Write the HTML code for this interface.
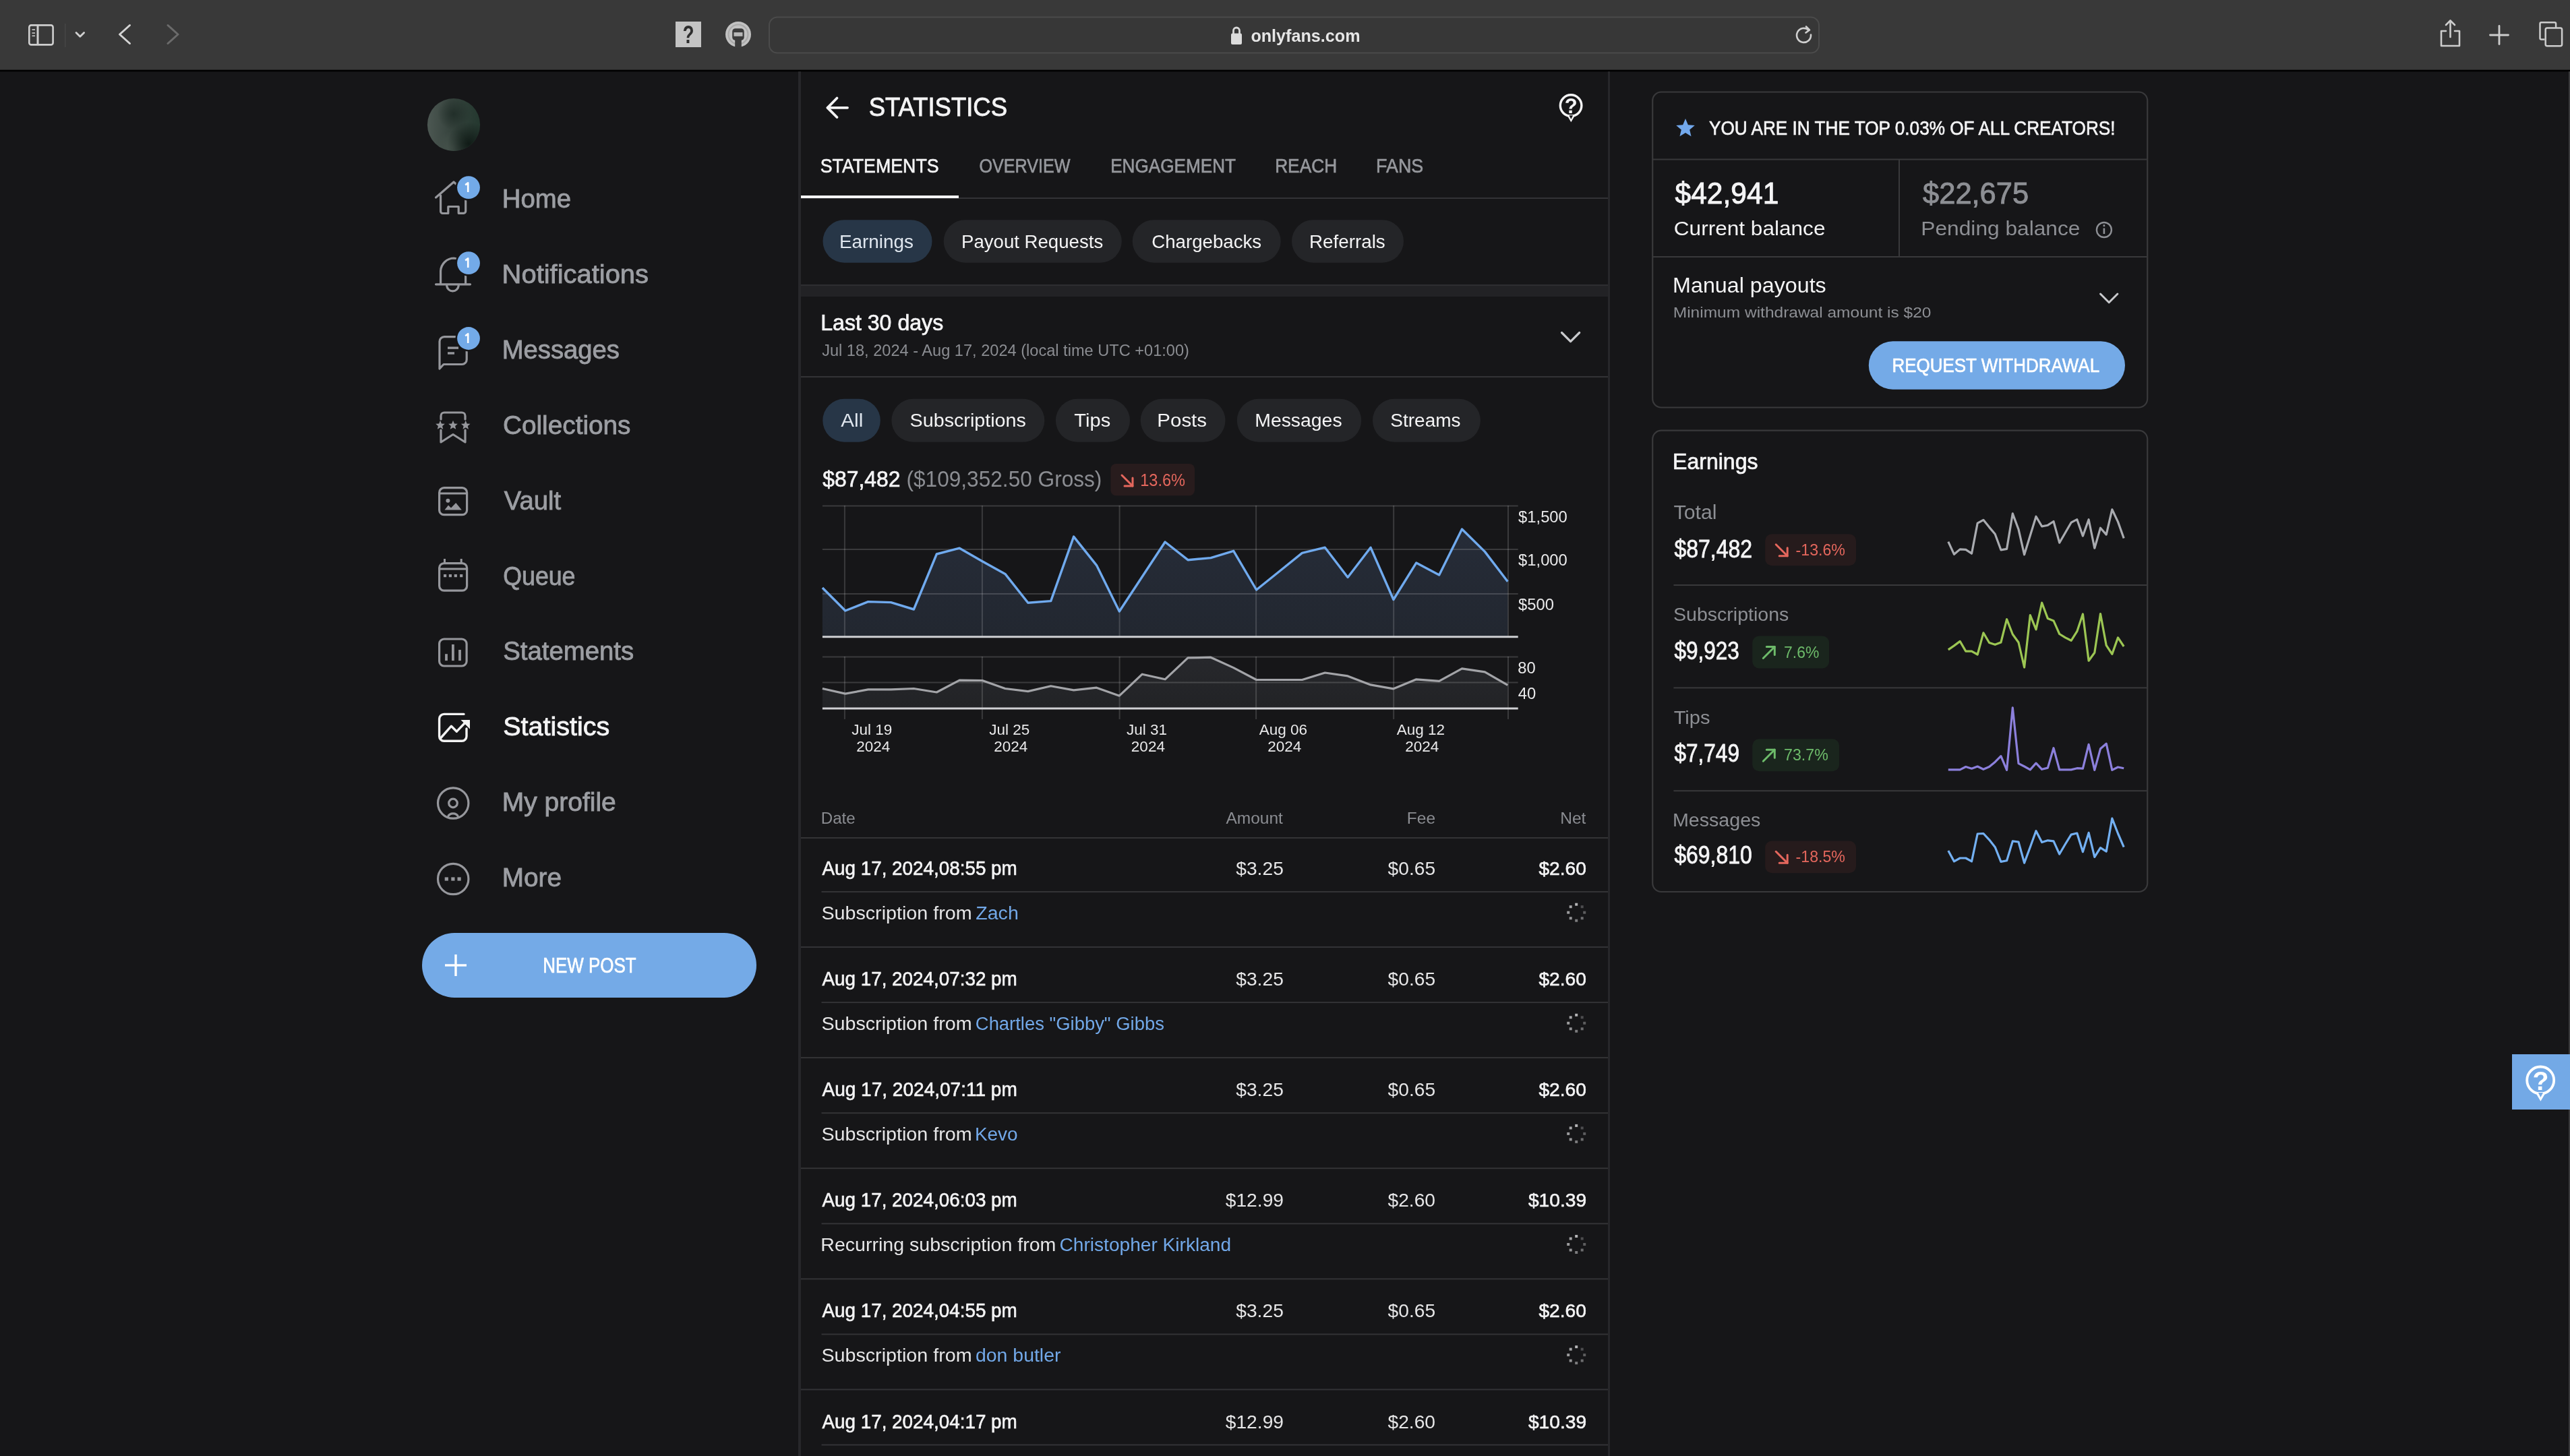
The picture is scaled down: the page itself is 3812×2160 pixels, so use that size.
<!DOCTYPE html>
<html><head><meta charset="utf-8"><title>Statistics</title>
<style>html,body{margin:0;padding:0;background:#161618;overflow:hidden;width:3812px;height:2160px}svg{display:block;font-family:"Liberation Sans",sans-serif;will-change:transform}</style></head>
<body><svg width="3812" height="2160" viewBox="0 0 3812 2160">
<rect x="0.00" y="0.00" width="3812.00" height="2160.00" fill="#161618"/>
<rect x="0.00" y="0.00" width="3812.00" height="104.00" fill="#393939"/>
<rect x="0.00" y="103.60" width="3812.00" height="2.60" fill="#000000"/>
<rect x="3810.00" y="106.00" width="2.00" height="2054.00" fill="#39393b"/>
<g fill="none" stroke="#cfcfcf" stroke-width="2.6"><rect x="43.3" y="37.4" width="35.3" height="29" rx="3"/><line x1="56" y1="37.4" x2="56" y2="66.4" stroke-width="3"/></g>
<g stroke="#bdbdbd" stroke-width="1.8"><line x1="47.5" y1="44" x2="52" y2="44"/><line x1="47.5" y1="49" x2="52" y2="49"/><line x1="47.5" y1="53.2" x2="52" y2="53.2"/></g>
<line x1="96.80" y1="35.00" x2="96.80" y2="70.00" stroke="#4a4a4a" stroke-width="1.2"/>
<polyline points="113,48.5 118.8,54.3 124.6,48.5" fill="none" stroke="#d0d0d0" stroke-width="2.8" stroke-linecap="round" stroke-linejoin="round"/>
<polyline points="192.5,37.5 177.5,51 192.5,64.5" fill="none" stroke="#d4d4d4" stroke-width="3" stroke-linecap="round" stroke-linejoin="round"/>
<polyline points="249,37.5 264,51 249,64.5" fill="none" stroke="#6b6b6b" stroke-width="3" stroke-linecap="round" stroke-linejoin="round"/>
<rect x="1002.00" y="32.00" width="38.00" height="38.00" fill="#c4c4c4"/>
<text x="1012.54" y="64.00" style="font-size:37.82px;font-weight:bold;" textLength="17.09" lengthAdjust="spacingAndGlyphs" fill="#2e2e2e"><tspan fill="#2e2e2e">?</tspan></text>
<circle cx="1095" cy="51" r="19" fill="#c2c2c2"/>
<circle cx="1095" cy="51" r="14.5" fill="none" stroke="#a9a9a9" stroke-width="2"/>
<rect x="1086.2" y="42.2" width="17.5" height="17.5" rx="4.5" fill="#3b3b3b"/>
<rect x="1088.5" y="48" width="13" height="5.8" fill="#b8b8b8"/>
<rect x="1090.2" y="59" width="9.6" height="12.5" fill="#3b3b3b"/>
<rect x="1141.00" y="25.50" width="1557.00" height="53.00" rx="12" fill="#373737" stroke="#4b4b4b" stroke-width="2"/>
<path d="M1829.5,50 v-4.5 a4.5,4.5 0 0 1 9,0 v4.5" fill="none" stroke="#d8d8d8" stroke-width="2.8"/>
<rect x="1826.00" y="49.50" width="16.00" height="16.50" rx="2" fill="#dcdcdc"/>
<text x="1855.39" y="61.70" style="font-size:26.50px;font-weight:bold;" textLength="162.14" lengthAdjust="spacingAndGlyphs" fill="#e6e6e6"><tspan fill="#e6e6e6">onlyfans.com</tspan></text>
<path d="M2686,51.5 a10.5,10.5 0 1 1 -3.5,-7" fill="none" stroke="#cfcfcf" stroke-width="2.6" stroke-linecap="round"/>
<polyline points="2679,39.5 2684,44.5 2678.5,48.5" fill="none" stroke="#cfcfcf" stroke-width="2.6" stroke-linecap="round" stroke-linejoin="round"/>
<g fill="none" stroke="#cdcdcd" stroke-width="2.6" stroke-linecap="round" stroke-linejoin="round"><path d="M3628,46 h-7 v22 h27 v-22 h-7"/><line x1="3634.5" y1="31" x2="3634.5" y2="55"/><polyline points="3628,37 3634.5,30.5 3641,37"/></g>
<g stroke="#cdcdcd" stroke-width="2.8" stroke-linecap="round"><line x1="3707" y1="38.5" x2="3707" y2="65.5"/><line x1="3693.5" y1="52" x2="3720.5" y2="52"/></g>
<g fill="none" stroke="#cdcdcd" stroke-width="2.5"><path d="M3774.5,58.6 h-5 a2,2 0 0 1 -2,-2 v-21.4 a2,2 0 0 1 2,-2 h19.6 a2,2 0 0 1 2,2 v6"/><rect x="3775.7" y="41.4" width="24.4" height="26.9" rx="2.5"/></g>
<defs><linearGradient id="avl" x1="0" y1="0" x2="1" y2="0"><stop offset="0" stop-color="#4d5853"/><stop offset="0.45" stop-color="#36433d"/><stop offset="1" stop-color="#24382f"/></linearGradient><radialGradient id="avd" cx="0.78" cy="0.85" r="0.4"><stop offset="0" stop-color="#0f1915" stop-opacity="0.95"/><stop offset="1" stop-color="#0f1915" stop-opacity="0"/></radialGradient><radialGradient id="avt" cx="0.5" cy="0.3" r="0.3"><stop offset="0" stop-color="#1d2a25" stop-opacity="0.8"/><stop offset="1" stop-color="#1d2a25" stop-opacity="0"/></radialGradient><radialGradient id="avb" cx="0.48" cy="0.92" r="0.3"><stop offset="0" stop-color="#4a5750" stop-opacity="0.8"/><stop offset="1" stop-color="#4a5750" stop-opacity="0"/></radialGradient><clipPath id="avc"><circle cx="673" cy="185" r="39.1"/></clipPath></defs>
<g clip-path="url(#avc)"><rect x="633" y="145" width="80" height="80" fill="url(#avl)"/><rect x="633" y="145" width="80" height="80" fill="url(#avt)"/><rect x="633" y="145" width="80" height="80" fill="url(#avb)"/><rect x="633" y="145" width="80" height="80" fill="url(#avd)"/></g>
<text x="744.78" y="307.90" style="font-size:39.71px;" textLength="102.22" lengthAdjust="spacingAndGlyphs" fill="#9c9ea3" stroke="#9c9ea3" stroke-width="0.87"><tspan fill="#9c9ea3" stroke="#9c9ea3">Home</tspan></text>
<text x="744.64" y="419.83" style="font-size:39.71px;" textLength="217.40" lengthAdjust="spacingAndGlyphs" fill="#9c9ea3" stroke="#9c9ea3" stroke-width="0.87"><tspan fill="#9c9ea3" stroke="#9c9ea3">Notifications</tspan></text>
<text x="744.78" y="531.76" style="font-size:39.71px;" textLength="174.12" lengthAdjust="spacingAndGlyphs" fill="#9c9ea3" stroke="#9c9ea3" stroke-width="0.87"><tspan fill="#9c9ea3" stroke="#9c9ea3">Messages</tspan></text>
<text x="746.00" y="643.69" style="font-size:39.71px;" textLength="189.47" lengthAdjust="spacingAndGlyphs" fill="#9c9ea3" stroke="#9c9ea3" stroke-width="0.87"><tspan fill="#9c9ea3" stroke="#9c9ea3">Collections</tspan></text>
<text x="747.75" y="755.62" style="font-size:39.71px;" textLength="84.31" lengthAdjust="spacingAndGlyphs" fill="#9c9ea3" stroke="#9c9ea3" stroke-width="0.87"><tspan fill="#9c9ea3" stroke="#9c9ea3">Vault</tspan></text>
<text x="746.24" y="867.55" style="font-size:39.71px;" textLength="107.24" lengthAdjust="spacingAndGlyphs" fill="#9c9ea3" stroke="#9c9ea3" stroke-width="0.87"><tspan fill="#9c9ea3" stroke="#9c9ea3">Queue</tspan></text>
<text x="746.21" y="979.48" style="font-size:39.71px;" textLength="193.92" lengthAdjust="spacingAndGlyphs" fill="#9c9ea3" stroke="#9c9ea3" stroke-width="0.87"><tspan fill="#9c9ea3" stroke="#9c9ea3">Statements</tspan></text>
<text x="746.16" y="1091.41" style="font-size:39.71px;" textLength="158.13" lengthAdjust="spacingAndGlyphs" fill="#f4f4f5" stroke="#f4f4f5" stroke-width="0.87"><tspan fill="#f4f4f5" stroke="#f4f4f5">Statistics</tspan></text>
<text x="744.72" y="1203.34" style="font-size:39.71px;" textLength="169.08" lengthAdjust="spacingAndGlyphs" fill="#9c9ea3" stroke="#9c9ea3" stroke-width="0.87"><tspan fill="#9c9ea3" stroke="#9c9ea3">My profile</tspan></text>
<text x="744.74" y="1315.27" style="font-size:39.71px;" textLength="88.30" lengthAdjust="spacingAndGlyphs" fill="#9c9ea3" stroke="#9c9ea3" stroke-width="0.87"><tspan fill="#9c9ea3" stroke="#9c9ea3">More</tspan></text>
<path d="M646.5,293 L673,270 L699,293 M653.6,290 V313.5 a3,3 0 0 0 3,3 H664.8 V306.5 H680.2 V316.3 H687.7 a3,3 0 0 0 3,-3 V293" fill="none" stroke="#96979c" stroke-width="3.2" stroke-linecap="round" stroke-linejoin="round"/>
<path d="M653.6,420.5 V402 a20,20 0 0 1 20,-19 a20,20 0 0 1 17,12 V420.5 M646.5,421.8 H697.5 M662.7,424 a8.8,8.8 0 0 0 17.5,0" fill="none" stroke="#96979c" stroke-width="3.2" stroke-linecap="round" stroke-linejoin="round"/>
<path d="M692.2,519 V533.5 a7,7 0 0 1 -7,7 H658 L652,547 V506.6 a7,7 0 0 1 7,-7 H676" fill="none" stroke="#96979c" stroke-width="3.2" stroke-linecap="round" stroke-linejoin="round"/>
<g stroke="#96979c" stroke-width="3.4"><line x1="664" y1="516.1" x2="680" y2="516.1"/><line x1="664" y1="524" x2="674" y2="524"/></g>
<path d="M654,622 V617 a5,5 0 0 1 5,-5 H685 a5,5 0 0 1 5,5 V622 M654,638 V656 L672,644.5 L690,656 V638" fill="none" stroke="#96979c" stroke-width="3.2" stroke-linecap="round" stroke-linejoin="round"/>
<polygon points="653.00,623.80 654.90,628.38 659.85,628.78 656.08,632.00 657.23,636.82 653.00,634.24 648.77,636.82 649.92,632.00 646.15,628.78 651.10,628.38" fill="#96979c"/>
<polygon points="672.00,623.80 673.90,628.38 678.85,628.78 675.08,632.00 676.23,636.82 672.00,634.24 667.77,636.82 668.92,632.00 665.15,628.78 670.10,628.38" fill="#96979c"/>
<polygon points="690.70,623.80 692.60,628.38 697.55,628.78 693.78,632.00 694.93,636.82 690.70,634.24 686.47,636.82 687.62,632.00 683.85,628.78 688.80,628.38" fill="#96979c"/>
<rect x="651.6" y="723.7" width="41" height="40" rx="7" fill="none" stroke="#96979c" stroke-width="3.2" stroke-linecap="round" stroke-linejoin="round"/>
<line x1="653" y1="732" x2="691" y2="732" stroke="#96979c" stroke-width="3"/>
<circle cx="664.4" cy="742.8" r="3" fill="#96979c"/>
<polygon points="659.5,756.5 665,749.6 669,753.5 676.2,745.9 684.8,756.5" fill="#96979c"/>
<rect x="651.6" y="835.6" width="41" height="40.6" rx="7" fill="none" stroke="#96979c" stroke-width="3.2" stroke-linecap="round" stroke-linejoin="round"/>
<g stroke="#96979c" stroke-width="3"><line x1="653" y1="843.9" x2="691" y2="843.9"/><line x1="659.5" y1="829" x2="659.5" y2="835"/><line x1="684.2" y1="829" x2="684.2" y2="835"/></g>
<rect x="658.00" y="852.00" width="4.20" height="4.20" fill="#96979c"/>
<rect x="665.80" y="852.00" width="4.20" height="4.20" fill="#96979c"/>
<rect x="673.70" y="852.00" width="4.20" height="4.20" fill="#96979c"/>
<rect x="682.10" y="852.00" width="4.20" height="4.20" fill="#96979c"/>
<rect x="651.6" y="948" width="40.5" height="40" rx="7" fill="none" stroke="#96979c" stroke-width="3.2" stroke-linecap="round" stroke-linejoin="round"/>
<rect x="660.10" y="970.20" width="3.80" height="9.90" fill="#96979c"/>
<rect x="670.00" y="956.00" width="3.80" height="24.10" fill="#96979c"/>
<rect x="680.10" y="964.00" width="3.80" height="16.10" fill="#96979c"/>
<path d="M688,1059.4 H658.6 a7,7 0 0 0 -7,7 V1092.3 a7,7 0 0 0 7,7 H685 a7,7 0 0 0 7,-7 V1081" fill="none" stroke="#f2f2f2" stroke-width="3.4" stroke-linecap="round" stroke-linejoin="round"/>
<polyline points="654,1094.5 669.4,1077.2 677.4,1085.2 690,1072" fill="none" stroke="#f2f2f2" stroke-width="3.4" stroke-linecap="round" stroke-linejoin="round"/>
<polygon points="683.5,1068 697,1068 697,1081.5" fill="#f2f2f2"/>
<circle cx="672.2" cy="1191.5" r="22.7" fill="none" stroke="#96979c" stroke-width="3.2" stroke-linecap="round" stroke-linejoin="round"/>
<circle cx="672" cy="1191.5" r="6.3" fill="none" stroke="#96979c" stroke-width="3.2" stroke-linecap="round" stroke-linejoin="round"/>
<path d="M664.5,1211.5 a8,7 0 0 1 15,0" fill="none" stroke="#96979c" stroke-width="3.2" stroke-linecap="round" stroke-linejoin="round"/>
<circle cx="672.2" cy="1304" r="22.7" fill="none" stroke="#96979c" stroke-width="3.2" stroke-linecap="round" stroke-linejoin="round"/>
<rect x="659.70" y="1301.40" width="5.20" height="5.20" fill="#96979c"/>
<rect x="669.30" y="1301.40" width="5.20" height="5.20" fill="#96979c"/>
<rect x="678.50" y="1301.40" width="5.20" height="5.20" fill="#96979c"/>
<circle cx="695" cy="278.2" r="19.5" fill="#161618"/>
<circle cx="695" cy="278.2" r="16.9" fill="#73aae8"/>
<path d="M690.2,274.4 L694.2,271.4 V285.09999999999997" fill="none" stroke="#fff" stroke-width="2.6" stroke-linejoin="round"/>
<circle cx="695" cy="390.2" r="19.5" fill="#161618"/>
<circle cx="695" cy="390.2" r="16.9" fill="#73aae8"/>
<path d="M690.2,386.4 L694.2,383.4 V397.09999999999997" fill="none" stroke="#fff" stroke-width="2.6" stroke-linejoin="round"/>
<circle cx="695" cy="502" r="19.5" fill="#161618"/>
<circle cx="695" cy="502" r="16.9" fill="#73aae8"/>
<path d="M690.2,498.2 L694.2,495.2 V508.9" fill="none" stroke="#fff" stroke-width="2.6" stroke-linejoin="round"/>
<rect x="626.00" y="1384.00" width="496.00" height="96.00" rx="48" fill="#74aae7"/>
<g stroke="#fff" stroke-width="3.4"><line x1="676" y1="1416" x2="676" y2="1448"/><line x1="660" y1="1432" x2="692" y2="1432"/></g>
<text x="805.20" y="1443.00" style="font-size:30.98px;" textLength="138.47" lengthAdjust="spacingAndGlyphs" fill="#ffffff" stroke="#ffffff" stroke-width="0.68"><tspan fill="#ffffff" stroke="#ffffff">NEW POST</tspan></text>
<rect x="1184.00" y="106.00" width="4.00" height="2054.00" fill="#27272a"/>
<rect x="2385.00" y="106.00" width="3.00" height="2054.00" fill="#27272a"/>
<g fill="none" stroke="#f4f4f5" stroke-width="3.8" stroke-linecap="round" stroke-linejoin="round"><line x1="1227.5" y1="159.8" x2="1257" y2="159.8"/><polyline points="1241.5,145.5 1227.5,159.8 1241.5,174"/></g>
<text x="1288.70" y="171.90" style="font-size:39.71px;" textLength="205.31" lengthAdjust="spacingAndGlyphs" fill="#f4f4f5" stroke="#f4f4f5" stroke-width="0.87"><tspan fill="#f4f4f5" stroke="#f4f4f5">STATISTICS</tspan></text>
<circle cx="2330.1" cy="156.6" r="15.8" fill="none" stroke="#f4f4f5" stroke-width="3.4"/>
<polygon points="2323.90,170.35 2330.30,181.25 2336.70,170.35" fill="#f4f4f5"/>
<polygon points="2327.50,171.29 2330.30,176.67 2333.10,171.29" fill="#161618"/>
<text x="2330.30" y="168.40" text-anchor="middle" style="font-size:31.00px;font-weight:bold" fill="#f4f4f5">?</text>
<text x="1216.71" y="255.80" style="font-size:28.65px;" textLength="175.86" lengthAdjust="spacingAndGlyphs" fill="#f4f4f5" stroke="#f4f4f5" stroke-width="0.63"><tspan fill="#f4f4f5" stroke="#f4f4f5">STATEMENTS</tspan></text>
<text x="1452.52" y="255.80" style="font-size:28.65px;" textLength="135.07" lengthAdjust="spacingAndGlyphs" fill="#96989d" stroke="#96989d" stroke-width="0.63"><tspan fill="#96989d" stroke="#96989d">OVERVIEW</tspan></text>
<text x="1647.16" y="255.80" style="font-size:28.65px;" textLength="185.86" lengthAdjust="spacingAndGlyphs" fill="#96989d" stroke="#96989d" stroke-width="0.63"><tspan fill="#96989d" stroke="#96989d">ENGAGEMENT</tspan></text>
<text x="1891.15" y="255.80" style="font-size:28.65px;" textLength="92.02" lengthAdjust="spacingAndGlyphs" fill="#96989d" stroke="#96989d" stroke-width="0.63"><tspan fill="#96989d" stroke="#96989d">REACH</tspan></text>
<text x="2041.10" y="255.80" style="font-size:28.65px;" textLength="70.18" lengthAdjust="spacingAndGlyphs" fill="#96989d" stroke="#96989d" stroke-width="0.63"><tspan fill="#96989d" stroke="#96989d">FANS</tspan></text>
<rect x="1188.00" y="293.00" width="1197.00" height="2.00" fill="#333336"/>
<rect x="1188.00" y="290.00" width="234.00" height="4.00" fill="#f4f4f5"/>
<rect x="1220.50" y="326.20" width="162.00" height="63.50" rx="31.75" fill="#273647"/>
<text x="1244.90" y="367.60" style="font-size:28.36px;" textLength="110.06" lengthAdjust="spacingAndGlyphs" fill="#dfe6ee"><tspan fill="#dfe6ee">Earnings</tspan></text>
<rect x="1399.70" y="326.20" width="264.10" height="63.50" rx="31.75" fill="#242528"/>
<text x="1426.02" y="367.60" style="font-size:28.36px;" textLength="210.17" lengthAdjust="spacingAndGlyphs" fill="#f4f4f5"><tspan fill="#f4f4f5">Payout Requests</tspan></text>
<rect x="1679.70" y="326.20" width="220.00" height="63.50" rx="31.75" fill="#242528"/>
<text x="1708.22" y="367.60" style="font-size:28.36px;" textLength="162.94" lengthAdjust="spacingAndGlyphs" fill="#f4f4f5"><tspan fill="#f4f4f5">Chargebacks</tspan></text>
<rect x="1916.00" y="326.20" width="166.00" height="63.50" rx="31.75" fill="#242528"/>
<text x="1941.91" y="367.60" style="font-size:28.36px;" textLength="112.85" lengthAdjust="spacingAndGlyphs" fill="#f4f4f5"><tspan fill="#f4f4f5">Referrals</tspan></text>
<rect x="1188.00" y="422.00" width="1197.00" height="2.00" fill="#2e2e31"/>
<rect x="1188.00" y="424.00" width="1197.00" height="16.00" fill="#222225"/>
<text x="1217.21" y="490.20" style="font-size:32.87px;" textLength="181.97" lengthAdjust="spacingAndGlyphs" fill="#f4f4f5" stroke="#f4f4f5" stroke-width="0.72"><tspan fill="#f4f4f5" stroke="#f4f4f5">Last 30 days</tspan></text>
<text x="1219.15" y="527.90" style="font-size:24.73px;" textLength="544.77" lengthAdjust="spacingAndGlyphs" fill="#8b8d92"><tspan fill="#8b8d92">Jul 18, 2024 - Aug 17, 2024 (local time UTC +01:00)</tspan></text>
<polyline points="2316.5,493.5 2329.6,506.6 2342.7,493.5" fill="none" stroke="#c9cacd" stroke-width="3.2" stroke-linecap="round" stroke-linejoin="round"/>
<rect x="1188.00" y="558.00" width="1197.00" height="2.00" fill="#333336"/>
<rect x="1220.30" y="591.80" width="85.50" height="64.00" rx="32.0" fill="#273647"/>
<text x="1247.33" y="633.20" style="font-size:28.36px;" textLength="32.94" lengthAdjust="spacingAndGlyphs" fill="#dfe6ee"><tspan fill="#dfe6ee">All</tspan></text>
<rect x="1322.40" y="591.80" width="226.90" height="64.00" rx="32.0" fill="#242528"/>
<text x="1349.61" y="633.20" style="font-size:28.36px;" textLength="172.21" lengthAdjust="spacingAndGlyphs" fill="#f4f4f5"><tspan fill="#f4f4f5">Subscriptions</tspan></text>
<rect x="1565.90" y="591.80" width="110.10" height="64.00" rx="32.0" fill="#242528"/>
<text x="1593.35" y="633.20" style="font-size:28.36px;" textLength="53.86" lengthAdjust="spacingAndGlyphs" fill="#f4f4f5"><tspan fill="#f4f4f5">Tips</tspan></text>
<rect x="1691.70" y="591.80" width="125.80" height="64.00" rx="32.0" fill="#242528"/>
<text x="1716.37" y="633.20" style="font-size:28.36px;" textLength="73.69" lengthAdjust="spacingAndGlyphs" fill="#f4f4f5"><tspan fill="#f4f4f5">Posts</tspan></text>
<rect x="1834.80" y="591.80" width="184.40" height="64.00" rx="32.0" fill="#242528"/>
<text x="1861.26" y="633.20" style="font-size:28.36px;" textLength="129.34" lengthAdjust="spacingAndGlyphs" fill="#f4f4f5"><tspan fill="#f4f4f5">Messages</tspan></text>
<rect x="2036.00" y="591.80" width="159.90" height="64.00" rx="32.0" fill="#242528"/>
<text x="2062.34" y="633.20" style="font-size:28.36px;" textLength="104.16" lengthAdjust="spacingAndGlyphs" fill="#f4f4f5"><tspan fill="#f4f4f5">Streams</tspan></text>
<text x="1220.24" y="721.80" style="font-size:32.87px;" textLength="115.16" lengthAdjust="spacingAndGlyphs" fill="#f4f4f5" stroke="#f4f4f5" stroke-width="0.72"><tspan fill="#f4f4f5" stroke="#f4f4f5">$87,482</tspan></text>
<text x="1344.52" y="721.80" style="font-size:32.87px;" textLength="289.86" lengthAdjust="spacingAndGlyphs" fill="#8b8d92"><tspan fill="#8b8d92">($109,352.50 Gross)</tspan></text>
<rect x="1647.40" y="687.90" width="124.60" height="47.40" rx="8" fill="#281c1d"/>
<g fill="none" stroke="#e5675d" stroke-width="3" stroke-linecap="round" stroke-linejoin="round"><line x1="1664" y1="705" x2="1680" y2="721"/><polyline points="1680,709 1680,721 1668,721"/></g>
<text x="1691.23" y="720.60" style="font-size:26.18px;" textLength="66.85" lengthAdjust="spacingAndGlyphs" fill="#e5675d"><tspan fill="#e5675d">13.6%</tspan></text>
<defs><linearGradient id="fillb" x1="0" y1="0" x2="0" y2="1"><stop offset="0" stop-color="#262c38"/><stop offset="1" stop-color="#222730"/></linearGradient><linearGradient id="fillg" x1="0" y1="0" x2="0" y2="1"><stop offset="0" stop-color="#27282c"/><stop offset="1" stop-color="#222326"/></linearGradient></defs>
<polygon points="1219.9,944 1219.9,872.0 1253.8,906.0 1287.7,892.6 1321.5,893.6 1355.4,904.0 1389.3,822.0 1423.2,813.2 1457.1,832.8 1490.9,851.4 1524.8,894.3 1558.7,891.6 1592.6,796.1 1626.5,838.6 1660.3,907.0 1694.2,855.5 1728.1,804.0 1762.0,830.7 1795.9,827.6 1829.7,817.3 1863.6,875.0 1897.5,847.7 1931.4,820.4 1965.3,812.2 1999.1,856.5 2033.0,812.2 2066.9,889.5 2100.8,834.9 2134.7,853.0 2168.5,785.0 2202.4,818.4 2236.3,862.7 2236.3,944" fill="url(#fillb)"/>
<line x1="1219.90" y1="750.50" x2="2251.70" y2="750.50" stroke="#ffffff" stroke-width="2" stroke-opacity="0.155"/>
<line x1="1219.90" y1="814.90" x2="2251.70" y2="814.90" stroke="#ffffff" stroke-width="2" stroke-opacity="0.155"/>
<line x1="1219.90" y1="880.90" x2="2251.70" y2="880.90" stroke="#ffffff" stroke-width="2" stroke-opacity="0.155"/>
<line x1="1252.90" y1="750.00" x2="1252.90" y2="944.00" stroke="#ffffff" stroke-width="2" stroke-opacity="0.155"/>
<line x1="1456.90" y1="750.00" x2="1456.90" y2="944.00" stroke="#ffffff" stroke-width="2" stroke-opacity="0.155"/>
<line x1="1660.60" y1="750.00" x2="1660.60" y2="944.00" stroke="#ffffff" stroke-width="2" stroke-opacity="0.155"/>
<line x1="1863.10" y1="750.00" x2="1863.10" y2="944.00" stroke="#ffffff" stroke-width="2" stroke-opacity="0.155"/>
<line x1="2067.20" y1="750.00" x2="2067.20" y2="944.00" stroke="#ffffff" stroke-width="2" stroke-opacity="0.155"/>
<line x1="2237.00" y1="750.00" x2="2237.00" y2="944.00" stroke="#ffffff" stroke-width="2" stroke-opacity="0.155"/>
<polyline points="1219.9,872.0 1253.8,906.0 1287.7,892.6 1321.5,893.6 1355.4,904.0 1389.3,822.0 1423.2,813.2 1457.1,832.8 1490.9,851.4 1524.8,894.3 1558.7,891.6 1592.6,796.1 1626.5,838.6 1660.3,907.0 1694.2,855.5 1728.1,804.0 1762.0,830.7 1795.9,827.6 1829.7,817.3 1863.6,875.0 1897.5,847.7 1931.4,820.4 1965.3,812.2 1999.1,856.5 2033.0,812.2 2066.9,889.5 2100.8,834.9 2134.7,853.0 2168.5,785.0 2202.4,818.4 2236.3,862.7" fill="none" stroke="#70aaee" stroke-width="3.4" stroke-linejoin="round"/>
<line x1="1219.90" y1="944.80" x2="2251.70" y2="944.80" stroke="#cfd0d3" stroke-width="3"/>
<text x="2252.06" y="775.10" style="font-size:23.80px;" textLength="72.80" lengthAdjust="spacingAndGlyphs" fill="#e9e9ea"><tspan fill="#e9e9ea">$1,500</tspan></text>
<text x="2252.06" y="839.40" style="font-size:23.80px;" textLength="72.80" lengthAdjust="spacingAndGlyphs" fill="#e9e9ea"><tspan fill="#e9e9ea">$1,000</tspan></text>
<text x="2252.06" y="905.30" style="font-size:23.80px;" textLength="52.95" lengthAdjust="spacingAndGlyphs" fill="#e9e9ea"><tspan fill="#e9e9ea">$500</tspan></text>
<polygon points="1219.9,1050 1219.9,1021.5 1253.8,1029.1 1287.7,1022.9 1321.5,1022.9 1355.4,1021.5 1389.3,1027.0 1423.2,1009.1 1457.1,1009.5 1490.9,1021.5 1524.8,1025.6 1558.7,1017.7 1592.6,1023.9 1626.5,1020.2 1660.3,1032.2 1694.2,1000.2 1728.1,1007.8 1762.0,975.9 1795.9,975.2 1829.7,990.6 1863.6,1008.5 1897.5,1008.5 1931.4,1008.5 1965.3,998.0 1999.1,1002.9 2033.0,1015.9 2066.9,1021.8 2100.8,1007.8 2134.7,1010.3 2168.5,991.9 2202.4,996.8 2236.3,1016.4 2236.3,1050" fill="url(#fillg)"/>
<line x1="1219.90" y1="974.60" x2="2251.70" y2="974.60" stroke="#ffffff" stroke-width="2" stroke-opacity="0.155"/>
<line x1="1219.90" y1="1012.60" x2="2251.70" y2="1012.60" stroke="#ffffff" stroke-width="2" stroke-opacity="0.155"/>
<line x1="1252.90" y1="974.00" x2="1252.90" y2="1067.00" stroke="#ffffff" stroke-width="2" stroke-opacity="0.155"/>
<line x1="1456.90" y1="974.00" x2="1456.90" y2="1067.00" stroke="#ffffff" stroke-width="2" stroke-opacity="0.155"/>
<line x1="1660.60" y1="974.00" x2="1660.60" y2="1067.00" stroke="#ffffff" stroke-width="2" stroke-opacity="0.155"/>
<line x1="1863.10" y1="974.00" x2="1863.10" y2="1067.00" stroke="#ffffff" stroke-width="2" stroke-opacity="0.155"/>
<line x1="2067.20" y1="974.00" x2="2067.20" y2="1067.00" stroke="#ffffff" stroke-width="2" stroke-opacity="0.155"/>
<line x1="2237.00" y1="974.00" x2="2237.00" y2="1067.00" stroke="#ffffff" stroke-width="2" stroke-opacity="0.155"/>
<polyline points="1219.9,1021.5 1253.8,1029.1 1287.7,1022.9 1321.5,1022.9 1355.4,1021.5 1389.3,1027.0 1423.2,1009.1 1457.1,1009.5 1490.9,1021.5 1524.8,1025.6 1558.7,1017.7 1592.6,1023.9 1626.5,1020.2 1660.3,1032.2 1694.2,1000.2 1728.1,1007.8 1762.0,975.9 1795.9,975.2 1829.7,990.6 1863.6,1008.5 1897.5,1008.5 1931.4,1008.5 1965.3,998.0 1999.1,1002.9 2033.0,1015.9 2066.9,1021.8 2100.8,1007.8 2134.7,1010.3 2168.5,991.9 2202.4,996.8 2236.3,1016.4" fill="none" stroke="#a3a4a8" stroke-width="3.2" stroke-linejoin="round"/>
<line x1="1219.90" y1="1051.00" x2="2251.70" y2="1051.00" stroke="#cfd0d3" stroke-width="3"/>
<text x="2251.29" y="999.10" style="font-size:23.80px;" textLength="26.47" lengthAdjust="spacingAndGlyphs" fill="#e9e9ea"><tspan fill="#e9e9ea">80</tspan></text>
<text x="2251.76" y="1037.20" style="font-size:23.80px;" textLength="26.47" lengthAdjust="spacingAndGlyphs" fill="#e9e9ea"><tspan fill="#e9e9ea">40</tspan></text>
<text x="1293.2" y="1089.5" text-anchor="middle" style="font-size:22.5px" fill="#e9e9ea">Jul 19</text>
<text x="1295.2" y="1115.2" text-anchor="middle" style="font-size:22.5px" fill="#e9e9ea">2024</text>
<text x="1497.2" y="1089.5" text-anchor="middle" style="font-size:22.5px" fill="#e9e9ea">Jul 25</text>
<text x="1499.2" y="1115.2" text-anchor="middle" style="font-size:22.5px" fill="#e9e9ea">2024</text>
<text x="1700.9" y="1089.5" text-anchor="middle" style="font-size:22.5px" fill="#e9e9ea">Jul 31</text>
<text x="1702.9" y="1115.2" text-anchor="middle" style="font-size:22.5px" fill="#e9e9ea">2024</text>
<text x="1903.3" y="1089.5" text-anchor="middle" style="font-size:22.5px" fill="#e9e9ea">Aug 06</text>
<text x="1905.3" y="1115.2" text-anchor="middle" style="font-size:22.5px" fill="#e9e9ea">2024</text>
<text x="2107.3" y="1089.5" text-anchor="middle" style="font-size:22.5px" fill="#e9e9ea">Aug 12</text>
<text x="2109.3" y="1115.2" text-anchor="middle" style="font-size:22.5px" fill="#e9e9ea">2024</text>
<text x="1217.71" y="1221.70" style="font-size:24.15px;" textLength="50.97" lengthAdjust="spacingAndGlyphs" fill="#8b8d92"><tspan fill="#8b8d92">Date</tspan></text>
<text x="1818.48" y="1222.20" style="font-size:24.50px;" textLength="84.44" lengthAdjust="spacingAndGlyphs" fill="#8b8d92"><tspan fill="#8b8d92">Amount</tspan></text>
<text x="2086.84" y="1222.20" style="font-size:24.50px;" textLength="42.22" lengthAdjust="spacingAndGlyphs" fill="#8b8d92"><tspan fill="#8b8d92">Fee</tspan></text>
<text x="2314.29" y="1222.20" style="font-size:24.50px;" textLength="38.13" lengthAdjust="spacingAndGlyphs" fill="#8b8d92"><tspan fill="#8b8d92">Net</tspan></text>
<rect x="1188.00" y="1242.00" width="1197.00" height="2.00" fill="#333336"/>
<text x="1219.45" y="1298.00" style="font-size:28.65px;" textLength="289.34" lengthAdjust="spacingAndGlyphs" fill="#f4f4f5" stroke="#f4f4f5" stroke-width="0.63"><tspan fill="#f4f4f5" stroke="#f4f4f5">Aug 17, 2024,08:55 pm</tspan></text>
<text x="1833.26" y="1298.00" style="font-size:28.20px;" textLength="70.57" lengthAdjust="spacingAndGlyphs" fill="#e6e6e7"><tspan fill="#e6e6e7">$3.25</tspan></text>
<text x="2058.56" y="1298.00" style="font-size:28.20px;" textLength="70.57" lengthAdjust="spacingAndGlyphs" fill="#e6e6e7"><tspan fill="#e6e6e7">$0.65</tspan></text>
<text x="2282.38" y="1298.00" style="font-size:28.20px;" textLength="70.57" lengthAdjust="spacingAndGlyphs" fill="#f4f4f5" stroke="#f4f4f5" stroke-width="0.62"><tspan fill="#f4f4f5" stroke="#f4f4f5">$2.60</tspan></text>
<rect x="1218.50" y="1322.00" width="1166.50" height="2.00" fill="#333336"/>
<text x="1218.41" y="1363.80" style="font-size:28.40px;" textLength="223.18" lengthAdjust="spacingAndGlyphs" fill="#e6e6e7"><tspan fill="#e6e6e7">Subscription from</tspan></text>
<text x="1447.27" y="1363.80" style="font-size:28.40px;" textLength="63.54" lengthAdjust="spacingAndGlyphs" fill="#72a8e8"><tspan fill="#72a8e8">Zach</tspan></text>
<rect x="2336.20" y="1339.70" width="4" height="4" fill="#b4b4b6" opacity="1"/>
<rect x="2327.71" y="1343.21" width="4" height="4" fill="#b4b4b6" opacity="0.9"/>
<rect x="2324.20" y="1351.70" width="4" height="4" fill="#b4b4b6" opacity="0.85"/>
<rect x="2327.71" y="1360.19" width="4" height="4" fill="#b4b4b6" opacity="0.8"/>
<rect x="2336.20" y="1363.70" width="4" height="4" fill="#b4b4b6" opacity="0.65"/>
<rect x="2344.69" y="1360.19" width="4" height="4" fill="#b4b4b6" opacity="0.55"/>
<rect x="2348.20" y="1351.70" width="4" height="4" fill="#b4b4b6" opacity="0.45"/>
<rect x="2344.69" y="1343.21" width="4" height="4" fill="#b4b4b6" opacity="0.35"/>
<rect x="1188.00" y="1404.00" width="1197.00" height="2.00" fill="#333336"/>
<text x="1219.45" y="1462.10" style="font-size:28.65px;" textLength="289.34" lengthAdjust="spacingAndGlyphs" fill="#f4f4f5" stroke="#f4f4f5" stroke-width="0.63"><tspan fill="#f4f4f5" stroke="#f4f4f5">Aug 17, 2024,07:32 pm</tspan></text>
<text x="1833.26" y="1462.10" style="font-size:28.20px;" textLength="70.57" lengthAdjust="spacingAndGlyphs" fill="#e6e6e7"><tspan fill="#e6e6e7">$3.25</tspan></text>
<text x="2058.56" y="1462.10" style="font-size:28.20px;" textLength="70.57" lengthAdjust="spacingAndGlyphs" fill="#e6e6e7"><tspan fill="#e6e6e7">$0.65</tspan></text>
<text x="2282.38" y="1462.10" style="font-size:28.20px;" textLength="70.57" lengthAdjust="spacingAndGlyphs" fill="#f4f4f5" stroke="#f4f4f5" stroke-width="0.62"><tspan fill="#f4f4f5" stroke="#f4f4f5">$2.60</tspan></text>
<rect x="1218.50" y="1486.10" width="1166.50" height="2.00" fill="#333336"/>
<text x="1218.41" y="1527.90" style="font-size:28.40px;" textLength="223.18" lengthAdjust="spacingAndGlyphs" fill="#e6e6e7"><tspan fill="#e6e6e7">Subscription from</tspan></text>
<text x="1446.83" y="1527.90" style="font-size:28.40px;" textLength="280.01" lengthAdjust="spacingAndGlyphs" fill="#72a8e8"><tspan fill="#72a8e8">Chartles &quot;Gibby&quot; Gibbs</tspan></text>
<rect x="2336.20" y="1503.80" width="4" height="4" fill="#b4b4b6" opacity="1"/>
<rect x="2327.71" y="1507.31" width="4" height="4" fill="#b4b4b6" opacity="0.9"/>
<rect x="2324.20" y="1515.80" width="4" height="4" fill="#b4b4b6" opacity="0.85"/>
<rect x="2327.71" y="1524.29" width="4" height="4" fill="#b4b4b6" opacity="0.8"/>
<rect x="2336.20" y="1527.80" width="4" height="4" fill="#b4b4b6" opacity="0.65"/>
<rect x="2344.69" y="1524.29" width="4" height="4" fill="#b4b4b6" opacity="0.55"/>
<rect x="2348.20" y="1515.80" width="4" height="4" fill="#b4b4b6" opacity="0.45"/>
<rect x="2344.69" y="1507.31" width="4" height="4" fill="#b4b4b6" opacity="0.35"/>
<rect x="1188.00" y="1568.10" width="1197.00" height="2.00" fill="#333336"/>
<text x="1219.45" y="1626.20" style="font-size:28.65px;" textLength="289.38" lengthAdjust="spacingAndGlyphs" fill="#f4f4f5" stroke="#f4f4f5" stroke-width="0.63"><tspan fill="#f4f4f5" stroke="#f4f4f5">Aug 17, 2024,07:11 pm</tspan></text>
<text x="1833.26" y="1626.20" style="font-size:28.20px;" textLength="70.57" lengthAdjust="spacingAndGlyphs" fill="#e6e6e7"><tspan fill="#e6e6e7">$3.25</tspan></text>
<text x="2058.56" y="1626.20" style="font-size:28.20px;" textLength="70.57" lengthAdjust="spacingAndGlyphs" fill="#e6e6e7"><tspan fill="#e6e6e7">$0.65</tspan></text>
<text x="2282.38" y="1626.20" style="font-size:28.20px;" textLength="70.57" lengthAdjust="spacingAndGlyphs" fill="#f4f4f5" stroke="#f4f4f5" stroke-width="0.62"><tspan fill="#f4f4f5" stroke="#f4f4f5">$2.60</tspan></text>
<rect x="1218.50" y="1650.20" width="1166.50" height="2.00" fill="#333336"/>
<text x="1218.41" y="1692.00" style="font-size:28.40px;" textLength="223.18" lengthAdjust="spacingAndGlyphs" fill="#e6e6e7"><tspan fill="#e6e6e7">Subscription from</tspan></text>
<text x="1445.89" y="1692.00" style="font-size:28.40px;" textLength="63.78" lengthAdjust="spacingAndGlyphs" fill="#72a8e8"><tspan fill="#72a8e8">Kevo</tspan></text>
<rect x="2336.20" y="1667.90" width="4" height="4" fill="#b4b4b6" opacity="1"/>
<rect x="2327.71" y="1671.41" width="4" height="4" fill="#b4b4b6" opacity="0.9"/>
<rect x="2324.20" y="1679.90" width="4" height="4" fill="#b4b4b6" opacity="0.85"/>
<rect x="2327.71" y="1688.39" width="4" height="4" fill="#b4b4b6" opacity="0.8"/>
<rect x="2336.20" y="1691.90" width="4" height="4" fill="#b4b4b6" opacity="0.65"/>
<rect x="2344.69" y="1688.39" width="4" height="4" fill="#b4b4b6" opacity="0.55"/>
<rect x="2348.20" y="1679.90" width="4" height="4" fill="#b4b4b6" opacity="0.45"/>
<rect x="2344.69" y="1671.41" width="4" height="4" fill="#b4b4b6" opacity="0.35"/>
<rect x="1188.00" y="1732.20" width="1197.00" height="2.00" fill="#333336"/>
<text x="1219.45" y="1790.30" style="font-size:28.65px;" textLength="289.34" lengthAdjust="spacingAndGlyphs" fill="#f4f4f5" stroke="#f4f4f5" stroke-width="0.63"><tspan fill="#f4f4f5" stroke="#f4f4f5">Aug 17, 2024,06:03 pm</tspan></text>
<text x="1817.75" y="1790.30" style="font-size:28.20px;" textLength="86.26" lengthAdjust="spacingAndGlyphs" fill="#e6e6e7"><tspan fill="#e6e6e7">$12.99</tspan></text>
<text x="2058.49" y="1790.30" style="font-size:28.20px;" textLength="70.57" lengthAdjust="spacingAndGlyphs" fill="#e6e6e7"><tspan fill="#e6e6e7">$2.60</tspan></text>
<text x="2266.94" y="1790.30" style="font-size:28.20px;" textLength="86.26" lengthAdjust="spacingAndGlyphs" fill="#f4f4f5" stroke="#f4f4f5" stroke-width="0.62"><tspan fill="#f4f4f5" stroke="#f4f4f5">$10.39</tspan></text>
<rect x="1218.50" y="1814.30" width="1166.50" height="2.00" fill="#333336"/>
<text x="1217.35" y="1856.10" style="font-size:28.40px;" textLength="348.99" lengthAdjust="spacingAndGlyphs" fill="#e6e6e7"><tspan fill="#e6e6e7">Recurring subscription from</tspan></text>
<text x="1571.60" y="1856.10" style="font-size:28.40px;" textLength="254.43" lengthAdjust="spacingAndGlyphs" fill="#72a8e8"><tspan fill="#72a8e8">Christopher Kirkland</tspan></text>
<rect x="2336.20" y="1832.00" width="4" height="4" fill="#b4b4b6" opacity="1"/>
<rect x="2327.71" y="1835.51" width="4" height="4" fill="#b4b4b6" opacity="0.9"/>
<rect x="2324.20" y="1844.00" width="4" height="4" fill="#b4b4b6" opacity="0.85"/>
<rect x="2327.71" y="1852.49" width="4" height="4" fill="#b4b4b6" opacity="0.8"/>
<rect x="2336.20" y="1856.00" width="4" height="4" fill="#b4b4b6" opacity="0.65"/>
<rect x="2344.69" y="1852.49" width="4" height="4" fill="#b4b4b6" opacity="0.55"/>
<rect x="2348.20" y="1844.00" width="4" height="4" fill="#b4b4b6" opacity="0.45"/>
<rect x="2344.69" y="1835.51" width="4" height="4" fill="#b4b4b6" opacity="0.35"/>
<rect x="1188.00" y="1896.30" width="1197.00" height="2.00" fill="#333336"/>
<text x="1219.45" y="1954.40" style="font-size:28.65px;" textLength="289.34" lengthAdjust="spacingAndGlyphs" fill="#f4f4f5" stroke="#f4f4f5" stroke-width="0.63"><tspan fill="#f4f4f5" stroke="#f4f4f5">Aug 17, 2024,04:55 pm</tspan></text>
<text x="1833.26" y="1954.40" style="font-size:28.20px;" textLength="70.57" lengthAdjust="spacingAndGlyphs" fill="#e6e6e7"><tspan fill="#e6e6e7">$3.25</tspan></text>
<text x="2058.56" y="1954.40" style="font-size:28.20px;" textLength="70.57" lengthAdjust="spacingAndGlyphs" fill="#e6e6e7"><tspan fill="#e6e6e7">$0.65</tspan></text>
<text x="2282.38" y="1954.40" style="font-size:28.20px;" textLength="70.57" lengthAdjust="spacingAndGlyphs" fill="#f4f4f5" stroke="#f4f4f5" stroke-width="0.62"><tspan fill="#f4f4f5" stroke="#f4f4f5">$2.60</tspan></text>
<rect x="1218.50" y="1978.40" width="1166.50" height="2.00" fill="#333336"/>
<text x="1218.41" y="2020.20" style="font-size:28.40px;" textLength="223.18" lengthAdjust="spacingAndGlyphs" fill="#e6e6e7"><tspan fill="#e6e6e7">Subscription from</tspan></text>
<text x="1446.99" y="2020.20" style="font-size:28.40px;" textLength="126.45" lengthAdjust="spacingAndGlyphs" fill="#72a8e8"><tspan fill="#72a8e8">don butler</tspan></text>
<rect x="2336.20" y="1996.10" width="4" height="4" fill="#b4b4b6" opacity="1"/>
<rect x="2327.71" y="1999.61" width="4" height="4" fill="#b4b4b6" opacity="0.9"/>
<rect x="2324.20" y="2008.10" width="4" height="4" fill="#b4b4b6" opacity="0.85"/>
<rect x="2327.71" y="2016.59" width="4" height="4" fill="#b4b4b6" opacity="0.8"/>
<rect x="2336.20" y="2020.10" width="4" height="4" fill="#b4b4b6" opacity="0.65"/>
<rect x="2344.69" y="2016.59" width="4" height="4" fill="#b4b4b6" opacity="0.55"/>
<rect x="2348.20" y="2008.10" width="4" height="4" fill="#b4b4b6" opacity="0.45"/>
<rect x="2344.69" y="1999.61" width="4" height="4" fill="#b4b4b6" opacity="0.35"/>
<rect x="1188.00" y="2060.40" width="1197.00" height="2.00" fill="#333336"/>
<text x="1219.45" y="2118.50" style="font-size:28.65px;" textLength="289.34" lengthAdjust="spacingAndGlyphs" fill="#f4f4f5" stroke="#f4f4f5" stroke-width="0.63"><tspan fill="#f4f4f5" stroke="#f4f4f5">Aug 17, 2024,04:17 pm</tspan></text>
<text x="1817.75" y="2118.50" style="font-size:28.20px;" textLength="86.26" lengthAdjust="spacingAndGlyphs" fill="#e6e6e7"><tspan fill="#e6e6e7">$12.99</tspan></text>
<text x="2058.49" y="2118.50" style="font-size:28.20px;" textLength="70.57" lengthAdjust="spacingAndGlyphs" fill="#e6e6e7"><tspan fill="#e6e6e7">$2.60</tspan></text>
<text x="2266.94" y="2118.50" style="font-size:28.20px;" textLength="86.26" lengthAdjust="spacingAndGlyphs" fill="#f4f4f5" stroke="#f4f4f5" stroke-width="0.62"><tspan fill="#f4f4f5" stroke="#f4f4f5">$10.39</tspan></text>
<rect x="1218.50" y="2142.50" width="1166.50" height="2.00" fill="#333336"/>
<rect x="2451.20" y="136.50" width="734.00" height="468.00" rx="13" fill="none" stroke="#39393b" stroke-width="2.2"/>
<polygon points="2500.00,176.00 2503.84,185.22 2513.79,186.02 2506.21,192.52 2508.52,202.23 2500.00,197.03 2491.48,202.23 2493.79,192.52 2486.21,186.02 2496.16,185.22" fill="#72a8ec"/>
<text x="2534.93" y="200.10" style="font-size:28.80px;" textLength="602.61" lengthAdjust="spacingAndGlyphs" fill="#f4f4f5" stroke="#f4f4f5" stroke-width="0.63"><tspan fill="#f4f4f5" stroke="#f4f4f5">YOU ARE IN THE TOP 0.03% OF ALL CREATORS!</tspan></text>
<rect x="2452.00" y="235.50" width="732.00" height="2.00" fill="#39393b"/>
<rect x="2816.00" y="237.00" width="2.00" height="143.50" fill="#39393b"/>
<rect x="2452.00" y="380.00" width="732.00" height="2.00" fill="#39393b"/>
<text x="2484.47" y="301.50" style="font-size:45.09px;" textLength="153.86" lengthAdjust="spacingAndGlyphs" fill="#f4f4f5" stroke="#f4f4f5" stroke-width="0.99"><tspan fill="#f4f4f5" stroke="#f4f4f5">$42,941</tspan></text>
<text x="2482.82" y="349.40" style="font-size:30.11px;" textLength="224.64" lengthAdjust="spacingAndGlyphs" fill="#f4f4f5"><tspan fill="#f4f4f5">Current balance</tspan></text>
<text x="2852.06" y="301.50" style="font-size:45.09px;" textLength="157.08" lengthAdjust="spacingAndGlyphs" fill="#8d8f94" stroke="#8d8f94" stroke-width="0.99"><tspan fill="#8d8f94" stroke="#8d8f94">$22,675</tspan></text>
<text x="2849.39" y="349.40" style="font-size:30.11px;" textLength="235.99" lengthAdjust="spacingAndGlyphs" fill="#8d8f94"><tspan fill="#8d8f94">Pending balance</tspan></text>
<circle cx="3120.9" cy="341" r="11" fill="none" stroke="#8d8f94" stroke-width="2.4"/>
<rect x="3119.60" y="338.50" width="2.60" height="8.50" fill="#8d8f94"/>
<rect x="3119.60" y="333.30" width="2.60" height="2.80" fill="#8d8f94"/>
<text x="2481.14" y="433.80" style="font-size:31.42px;" textLength="227.60" lengthAdjust="spacingAndGlyphs" fill="#f4f4f5"><tspan fill="#f4f4f5">Manual payouts</tspan></text>
<text x="2481.78" y="471.30" style="font-size:22.84px;" textLength="382.64" lengthAdjust="spacingAndGlyphs" fill="#8d8f94"><tspan fill="#8d8f94">Minimum withdrawal amount is $20</tspan></text>
<polyline points="3115.5,436 3128.2,448.7 3140.9,436" fill="none" stroke="#c9cacd" stroke-width="3" stroke-linecap="round" stroke-linejoin="round"/>
<rect x="2771.80" y="506.20" width="380.20" height="71.60" rx="35.8" fill="#74aae7"/>
<text x="2806.38" y="552.00" style="font-size:29.09px;" textLength="307.75" lengthAdjust="spacingAndGlyphs" fill="#ffffff" stroke="#ffffff" stroke-width="0.64"><tspan fill="#ffffff" stroke="#ffffff">REQUEST WITHDRAWAL</tspan></text>
<rect x="2451.20" y="638.60" width="734.00" height="684.40" rx="13" fill="none" stroke="#39393b" stroke-width="2.2"/>
<text x="2481.02" y="696.40" style="font-size:32.73px;" textLength="126.53" lengthAdjust="spacingAndGlyphs" fill="#f4f4f5" stroke="#f4f4f5" stroke-width="0.72"><tspan fill="#f4f4f5" stroke="#f4f4f5">Earnings</tspan></text>
<text x="2482.62" y="769.80" style="font-size:29.67px;" textLength="63.92" lengthAdjust="spacingAndGlyphs" fill="#8d8f94"><tspan fill="#8d8f94">Total</tspan></text>
<text x="2483.38" y="826.70" style="font-size:36.36px;" textLength="115.70" lengthAdjust="spacingAndGlyphs" fill="#f4f4f5" stroke="#f4f4f5" stroke-width="0.80"><tspan fill="#f4f4f5" stroke="#f4f4f5">$87,482</tspan></text>
<rect x="2618.20" y="792.30" width="134.80" height="47.00" rx="10" fill="#261b1c"/>
<g fill="none" stroke="#e5675d" stroke-width="3" stroke-linecap="round" stroke-linejoin="round"><line x1="2634.2" y1="807.8" x2="2651.2" y2="824.8"/><polyline points="2651.2,812.8 2651.2,824.8 2639.2,824.8"/></g>
<text x="2663.56" y="823.80" style="font-size:23.85px;" textLength="73.42" lengthAdjust="spacingAndGlyphs" fill="#e5675d"><tspan fill="#e5675d">-13.6%</tspan></text>
<text x="2482.02" y="921.10" style="font-size:28.36px;" textLength="171.30" lengthAdjust="spacingAndGlyphs" fill="#8d8f94"><tspan fill="#8d8f94">Subscriptions</tspan></text>
<text x="2483.38" y="978.00" style="font-size:36.36px;" textLength="96.49" lengthAdjust="spacingAndGlyphs" fill="#f4f4f5" stroke="#f4f4f5" stroke-width="0.80"><tspan fill="#f4f4f5" stroke="#f4f4f5">$9,923</tspan></text>
<rect x="2599.30" y="943.60" width="113.80" height="47.90" rx="10" fill="#1a251d"/>
<g fill="none" stroke="#6dbb6a" stroke-width="3" stroke-linecap="round" stroke-linejoin="round"><line x1="2615.3" y1="976.5" x2="2632.3" y2="959.5"/><polyline points="2620.3,959.5 2632.3,959.5 2632.3,971.5"/></g>
<text x="2646.05" y="975.55" style="font-size:23.85px;" textLength="52.23" lengthAdjust="spacingAndGlyphs" fill="#6dbb6a"><tspan fill="#6dbb6a">7.6%</tspan></text>
<text x="2482.65" y="1073.80" style="font-size:27.49px;" textLength="53.86" lengthAdjust="spacingAndGlyphs" fill="#8d8f94"><tspan fill="#8d8f94">Tips</tspan></text>
<text x="2483.38" y="1129.80" style="font-size:36.36px;" textLength="96.57" lengthAdjust="spacingAndGlyphs" fill="#f4f4f5" stroke="#f4f4f5" stroke-width="0.80"><tspan fill="#f4f4f5" stroke="#f4f4f5">$7,749</tspan></text>
<rect x="2599.30" y="1096.20" width="128.80" height="48.00" rx="10" fill="#1a251d"/>
<g fill="none" stroke="#6dbb6a" stroke-width="3" stroke-linecap="round" stroke-linejoin="round"><line x1="2615.3" y1="1129.2" x2="2632.3" y2="1112.2"/><polyline points="2620.3,1112.2 2632.3,1112.2 2632.3,1124.2"/></g>
<text x="2646.04" y="1128.20" style="font-size:23.85px;" textLength="65.72" lengthAdjust="spacingAndGlyphs" fill="#6dbb6a"><tspan fill="#6dbb6a">73.7%</tspan></text>
<text x="2480.94" y="1225.70" style="font-size:27.49px;" textLength="130.47" lengthAdjust="spacingAndGlyphs" fill="#8d8f94"><tspan fill="#8d8f94">Messages</tspan></text>
<text x="2483.38" y="1281.10" style="font-size:36.36px;" textLength="115.29" lengthAdjust="spacingAndGlyphs" fill="#f4f4f5" stroke="#f4f4f5" stroke-width="0.80"><tspan fill="#f4f4f5" stroke="#f4f4f5">$69,810</tspan></text>
<rect x="2618.20" y="1247.50" width="134.80" height="47.70" rx="10" fill="#261b1c"/>
<g fill="none" stroke="#e5675d" stroke-width="3" stroke-linecap="round" stroke-linejoin="round"><line x1="2634.2" y1="1263.3" x2="2651.2" y2="1280.3"/><polyline points="2651.2,1268.3 2651.2,1280.3 2639.2,1280.3"/></g>
<text x="2663.56" y="1279.35" style="font-size:23.85px;" textLength="73.42" lengthAdjust="spacingAndGlyphs" fill="#e5675d"><tspan fill="#e5675d">-18.5%</tspan></text>
<rect x="2482.40" y="867.00" width="702.00" height="2.00" fill="#39393b"/>
<rect x="2482.40" y="1019.40" width="702.00" height="2.00" fill="#39393b"/>
<rect x="2482.40" y="1172.20" width="702.00" height="2.00" fill="#39393b"/>
<polyline points="2889.8,803.6 2898.5,822.3 2907.2,814.9 2915.8,815.4 2924.5,821.2 2933.2,776.1 2941.9,771.3 2950.6,782.1 2959.2,792.3 2967.9,815.8 2976.6,814.3 2985.3,761.9 2994.0,785.2 3002.6,822.8 3011.3,794.5 3020.0,766.2 3028.7,780.9 3037.4,779.2 3046.0,773.5 3054.7,805.2 3063.4,790.2 3072.1,775.2 3080.8,770.7 3089.4,795.1 3098.1,770.7 3106.8,813.2 3115.5,783.2 3124.2,793.1 3132.8,755.8 3141.5,774.1 3150.2,798.5" fill="none" stroke="#a9abb0" stroke-width="3.2" stroke-linejoin="round"/>
<polyline points="2889.8,963.9 2898.5,957.9 2907.2,951.4 2915.8,966.1 2924.5,966.1 2933.2,971.0 2941.9,938.8 2950.6,953.5 2959.2,956.3 2967.9,953.0 2976.6,918.7 2985.3,941.0 2994.0,953.0 3002.6,990.0 3011.3,912.7 3020.0,933.9 3028.7,894.2 3037.4,917.6 3046.0,920.9 3054.7,940.5 3063.4,945.9 3072.1,950.3 3080.8,936.7 3089.4,911.0 3098.1,980.2 3106.8,968.2 3115.5,910.5 3124.2,957.4 3132.8,970.4 3141.5,945.9 3150.2,959.0" fill="none" stroke="#9cc653" stroke-width="3.2" stroke-linejoin="round"/>
<polyline points="2889.8,1141.9 2898.5,1141.9 2907.2,1141.9 2915.8,1137.5 2924.5,1140.2 2933.2,1137.0 2941.9,1141.3 2950.6,1137.5 2959.2,1130.4 2967.9,1121.7 2976.6,1142.4 2985.3,1049.8 2994.0,1132.6 3002.6,1137.0 3011.3,1141.9 3020.0,1132.1 3028.7,1141.3 3037.4,1139.1 3046.0,1109.7 3054.7,1141.9 3063.4,1141.9 3072.1,1141.9 3080.8,1139.7 3089.4,1140.2 3098.1,1104.3 3106.8,1142.4 3115.5,1110.8 3124.2,1103.2 3132.8,1142.4 3141.5,1138.0 3150.2,1139.7" fill="none" stroke="#8c80dc" stroke-width="3.2" stroke-linejoin="round"/>
<polyline points="2889.8,1262.1 2898.5,1277.9 2907.2,1273.0 2915.8,1273.0 2924.5,1277.9 2933.2,1237.0 2941.9,1236.5 2950.6,1245.8 2959.2,1256.7 2967.9,1278.4 2976.6,1276.8 2985.3,1247.9 2994.0,1249.0 3002.6,1280.1 3011.3,1256.7 3020.0,1232.7 3028.7,1249.6 3037.4,1246.8 3046.0,1247.9 3054.7,1267.0 3063.4,1252.3 3072.1,1238.1 3080.8,1236.0 3089.4,1263.7 3098.1,1235.4 3106.8,1271.4 3115.5,1257.7 3124.2,1263.2 3132.8,1214.2 3141.5,1236.5 3150.2,1256.7" fill="none" stroke="#73b0f2" stroke-width="3.2" stroke-linejoin="round"/>
<rect x="3726.00" y="1564.00" width="86.00" height="82.00" fill="#73a9e6"/>
<circle cx="3768.2" cy="1602.5" r="20" fill="none" stroke="#ffffff" stroke-width="3.8"/>
<polygon points="3760.35,1619.90 3768.40,1633.70 3776.55,1619.90" fill="#ffffff"/>
<polygon points="3764.91,1621.10 3768.45,1627.90 3772.00,1621.10" fill="#73a9e6"/>
<text x="3768.45" y="1617.44" text-anchor="middle" style="font-size:39.24px;font-weight:bold" fill="#ffffff">?</text>
</svg></body></html>
